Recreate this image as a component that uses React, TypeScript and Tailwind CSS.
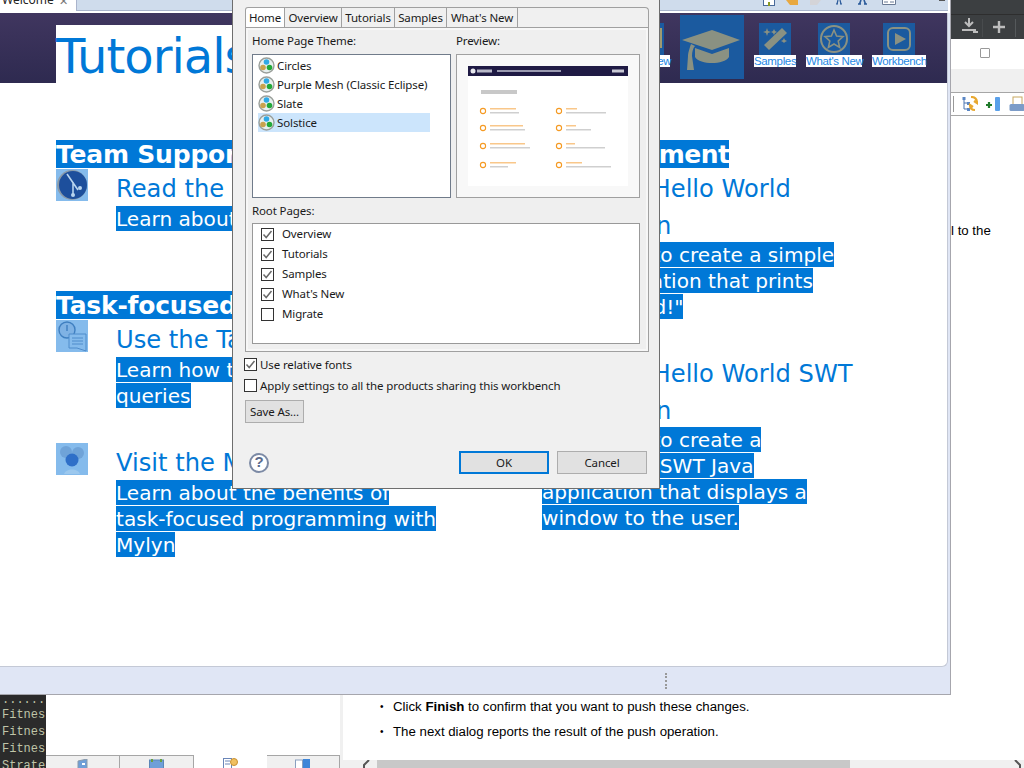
import type { ReactNode } from "react";

const theme = ["Circles", "Purple Mesh (Classic Eclipse)", "Slate", "Solstice"];
const rootPages = [
  { label: "Overview", checked: true },
  { label: "Tutorials", checked: true },
  { label: "Samples", checked: true },
  { label: "What's New", checked: true },
  { label: "Migrate", checked: false },
];
const dialogTabs = ["Overview", "Tutorials", "Samples", "What's New"];
const previewRows = [
  { y: 43, a: 26, b: 29, c: 11, d: 40 },
  { y: 60, a: 33, b: 35, c: 10, d: 25 },
  { y: 78, a: 35, b: 40, c: 9, d: 39 },
  { y: 97, a: 26, b: 18, c: 16, d: 45 },
];

function ThemeIcon() {
  return (
    <svg width="17" height="17" viewBox="0 0 17 17" className="shrink-0">
      <circle cx="8.5" cy="8.5" r="7.5" fill="#e8f0f0" stroke="#9a9f9a" strokeWidth="1.4" />
      <circle cx="8.5" cy="5" r="2.8" fill="#2fa9e6" />
      <circle cx="5" cy="10.5" r="2.8" fill="#c9a24e" />
      <circle cx="11.5" cy="10.5" r="2.8" fill="#22a83a" />
    </svg>
  );
}

function Check({ checked }: { checked: boolean }) {
  return (
    <div className="w-[13px] h-[13px] border border-[#333333] bg-white shrink-0 flex items-center justify-center">
      {checked && (
        <svg width="11" height="11" viewBox="0 0 11 11">
          <path d="M1.5 5.5 L4.2 8.5 L9.5 2" fill="none" stroke="#6a6a6a" strokeWidth="1.5" />
        </svg>
      )}
    </div>
  );
}

function PreviewShot() {
  return (
    <svg width="160" height="120" viewBox="0 0 160 120">
      <rect width="160" height="120" fill="#ffffff" />
      <rect width="160" height="10" fill="#1f1a44" />
      <circle cx="5" cy="5" r="2.5" fill="#e8e8ee" />
      <rect x="9" y="3.5" width="15" height="3" fill="#b8b8c8" />
      <rect x="29" y="4" width="64" height="2" fill="#9a9ab0" />
      <rect x="144" y="3.5" width="12" height="3" fill="#c8c8d4" />
      <rect x="13" y="24" width="36" height="4" fill="#c8c8c8" />
      {previewRows.map((r) => (
        <g key={r.y}>
          <circle cx="15" cy={r.y + 2} r="2.6" fill="none" stroke="#f59a23" strokeWidth="1.1" />
          <rect x="22" y={r.y - 1} width={r.a} height="1.5" fill="#f9c78a" />
          <rect x="22" y={r.y + 3} width={r.b} height="1.5" fill="#cfcfcf" />
          <circle cx="91" cy={r.y + 2} r="2.6" fill="none" stroke="#f59a23" strokeWidth="1.1" />
          <rect x="98" y={r.y - 1} width={r.c} height="1.5" fill="#f9c78a" />
          <rect x="98" y={r.y + 3} width={r.d} height="1.5" fill="#cfcfcf" />
        </g>
      ))}
    </svg>
  );
}

function Dialog() {
  return (
    <div className="absolute left-[232px] top-0 w-[428px] h-[489px] bg-[#f0f0f0] border-x border-b border-[#6e6e6e] pt-[7px] font-['Noto_Sans',sans-serif] text-[11.5px] tracking-[-0.12px] text-[#1a1a1a]">
      <div className="ml-[12px] w-[404px] h-[345px] flex flex-col">
        <div className="flex h-[20px] items-stretch">
          <div className="w-[40px] bg-white border border-b-0 border-[#a0a0a0] rounded-tl-[3px] flex items-center justify-center">Home</div>
          {dialogTabs.map((t, i) => (
            <div
              key={t}
              className={`border-t border-r border-[#a0a0a0] flex items-center justify-center ${["w-[57px]", "w-[53px]", "w-[52px]", "w-[71px]"][i]}`}
            >
              {t}
            </div>
          ))}
          <div className="flex-1 border-t border-r border-[#a0a0a0] rounded-tr-[4px] mb-[-1px]" />
        </div>
        <div className="flex-1 border border-[#a0a0a0] pl-[6px] bg-[#efefef] shadow-[inset_0_0_0_2px_#f7f7f7]">
          <div className="grid grid-cols-[199px_184px] gap-x-[5px] pt-[5px]">
            <div className="leading-[16px] h-[21px]">Home Page Theme:</div>
            <div className="leading-[16px] h-[21px]">Preview:</div>
            <div className="h-[144px] border border-[#707b8a] bg-white pl-[5px] pt-[1px]">
              {theme.map((t) => (
                <div
                  key={t}
                  className={`h-[19px] w-[172px] flex items-center gap-[2px] ${t === "Solstice" ? "bg-[#cce5fc]" : ""}`}
                >
                  <ThemeIcon />
                  <span className="whitespace-nowrap">{t}</span>
                </div>
              ))}
            </div>
            <div className="h-[144px] border border-[#a0a0a0] bg-[#f8f8f8] flex items-center justify-center">
              <PreviewShot />
            </div>
          </div>
          <div className="mt-[5px] h-[20px] leading-[16px]">Root Pages:</div>
          <div className="w-[388px] h-[121px] border border-[#999999] bg-white pl-[8px]">
            {rootPages.map((p) => (
              <div key={p.label} className="h-[20px] flex items-center gap-[8px]">
                <Check checked={p.checked} />
                <span>{p.label}</span>
              </div>
            ))}
          </div>
        </div>
      </div>
      <div className="ml-[11px] mt-[2px] h-[21px] flex items-center gap-[3px]">
        <Check checked />
        <span>Use relative fonts</span>
      </div>
      <div className="ml-[11px] h-[21px] flex items-center gap-[3px]">
        <Check checked={false} />
        <span className="whitespace-nowrap">Apply settings to all the products sharing this workbench</span>
      </div>
      <div className="ml-[12px] mt-[4px] w-[59px] h-[23px] border border-[#adadad] bg-[#e1e1e1] flex items-center justify-center">Save As...</div>
      <div className="mt-[28px] h-[23px] pl-[16px] pr-[12px] flex items-center">
        <div className="w-[20px] h-[20px] rounded-full border-2 border-[#7c8aa5] bg-white flex items-center justify-center font-['Liberation_Sans',sans-serif] font-bold text-[15px] text-[#5b6b8c]">?</div>
        <div className="ml-auto w-[90px] h-[23px] border-2 border-[#0078d7] bg-[#e1e1e1] flex items-center justify-center">OK</div>
        <div className="ml-[8px] w-[90px] h-[23px] border border-[#adadad] bg-[#e1e1e1] flex items-center justify-center">Cancel</div>
      </div>
    </div>
  );
}

function NavItem({ label, children, big, labelWidth }: { label?: string; children: ReactNode; big?: boolean; labelWidth?: string }) {
  return (
    <div className={`flex flex-col items-center ${big ? "pt-[2px]" : "pt-[10px]"}`}>
      <div className={`${big ? "w-[64px] h-[64px]" : "w-[32px] h-[32px]"} bg-[#1b5a9f]`}>{children}</div>
      {label && (
        <div className={`h-[12px] bg-white text-center text-[11.5px] leading-[12px] tracking-[-0.35px] text-[#1e88e5] font-['Liberation_Sans',sans-serif] whitespace-nowrap ${labelWidth ?? ""}`}>
          {label}
        </div>
      )}
    </div>
  );
}

function Banner() {
  const c = "#8a9182";
  return (
    <div className="h-[70px] shrink-0 flex bg-gradient-to-b from-[#40365f] to-[#2e2a50] pl-[56px]">
      <div className="mt-[12px] w-[300px] h-[58px] bg-white pt-[4px] text-[48px] leading-[54px] tracking-[-1px] text-[#0078d7] font-['DejaVu_Sans',sans-serif]">
        Tutorials
      </div>
      <div className="ml-auto flex gap-[10px] pr-[21px]">
        <NavItem label="Overview" labelWidth="w-[44px]">
          <svg viewBox="0 0 32 32" width="32" height="32">
            <path d="M29 5 V25" stroke="#a09a70" strokeWidth="2" fill="none" />
          </svg>
        </NavItem>
        <NavItem big>
          <svg viewBox="0 0 64 64" width="64" height="64">
            <path d="M32 15 L60 25 L32 35 L2 25 Z" fill={c} />
            <path d="M15 33 L32 39 L49 33 V42 C44 50 20 50 15 42 Z" fill={c} />
            <path d="M11 29 C9 35 8 38 8 41 L7 55 H14 L12 41 C12 37 13 33 15 31 Z" fill={c} />
          </svg>
        </NavItem>
        <NavItem label="Samples" labelWidth="w-[42px]">
          <svg viewBox="0 0 32 32" width="32" height="32">
            <path d="M23 5 L28 10 L10 27 L5 22 Z" fill={c} />
            <path d="M8 5 L9 8 L12 9 L9 10 L8 13 L7 10 L4 9 L7 8 Z M15 6 L16 8 L18 9 L16 10 L15 12 L14 10 L12 9 L14 8 Z M25 15 L26 17 L28 18 L26 19 L25 20 L24 19 L22 18 L24 17 Z" fill={c} />
          </svg>
        </NavItem>
        <NavItem label="What's New" labelWidth="w-[56px]">
          <svg viewBox="0 0 32 32" width="32" height="32">
            <circle cx="16" cy="16" r="13" fill="none" stroke={c} strokeWidth="2" />
            <path d="M16 7 L18.6 13 L25 13.6 L20.2 18 L21.6 24.4 L16 21 L10.4 24.4 L11.8 18 L7 13.6 L13.4 13 Z" fill="none" stroke={c} strokeWidth="1.6" />
          </svg>
        </NavItem>
        <NavItem label="Workbench" labelWidth="w-[54px]">
          <svg viewBox="0 0 32 32" width="32" height="32">
            <rect x="5" y="5" width="22" height="22" rx="5" fill="none" stroke={c} strokeWidth="2" />
            <path d="M12 10 L23 16 L12 22 Z" fill={c} />
          </svg>
        </NavItem>
      </div>
    </div>
  );
}

function Heading({ children, tight }: { children: ReactNode; tight?: boolean }) {
  return (
    <h2 className={`h-[28px] text-[25px] font-bold whitespace-nowrap ${tight ? "tracking-[-0.5px]" : "tracking-[-0.2px]"}`}>
      <span className="block w-max h-[28px] leading-[29px] bg-[#0078d7] text-white">{children}</span>
    </h2>
  );
}

function Item({ icon, title, lines, className, twoLine }: { icon: ReactNode; title: ReactNode; lines: string[]; className?: string; twoLine?: boolean }) {
  return (
    <div className={`flex ${className ?? ""}`}>
      <div className="w-[32px] h-[32px] bg-[#85bbec] shrink-0">{icon}</div>
      <div className="ml-[28px] pt-[2px]">
        <div className="text-[24.2px] leading-[37px] text-[#0078d7] whitespace-nowrap">{title}</div>
        <div className={`text-[20.1px] leading-[26px] whitespace-nowrap mb-[-1px] ${twoLine ? "-mt-[3px]" : "-mt-[2px]"}`}>
          {lines.map((l) => (
            <div key={l}>
              <span className="bg-[#0078d7] text-white pt-[1px]">{l}</span>
            </div>
          ))}
        </div>
      </div>
    </div>
  );
}

function Content() {
  return (
    <div className="flex-1 grid grid-cols-[426px_1fr] pl-[56px] pt-[57px] font-['DejaVu_Sans',sans-serif]">
      <div>
        <Heading>Team Support with Git</Heading>
        <Item
          className="mt-[1px]"
          icon={
            <svg viewBox="0 0 32 32" width="32" height="32">
              <circle cx="16" cy="16" r="15" fill="#8a9aa8" />
              <circle cx="17" cy="16" r="14" fill="#1d4f9c" />
              <path d="M11 5 L22 21 M17 13 L17 26" stroke="#b7d4ee" strokeWidth="1.6" fill="none" />
              <circle cx="24" cy="19" r="2" fill="#b7d4ee" />
              <circle cx="17" cy="26" r="2" fill="#b7d4ee" />
            </svg>
          }
          title="Read the Git tutorial"
          lines={["Learn about Git"]}
        />
        <div className="mt-[60px]">
          <Heading>Task-focused programming</Heading>
        </div>
        <Item
          className="mt-[1px]"
          icon={
            <svg viewBox="0 0 32 32" width="32" height="32">
              <circle cx="11" cy="10" r="8" fill="#7fb2e4" stroke="#3f7fc0" strokeWidth="1.4" />
              <path d="M11 5 V11" stroke="#3f7fc0" strokeWidth="1.4" />
              <path d="M13 14 H30 V31 L21 28 H13 Z" fill="#85bbec" stroke="#4f8ccb" />
              <path d="M16 18 H27 M16 21 H27 M16 24 H27" stroke="#4f8ccb" />
            </svg>
          }
          title="Use the Task List"
          lines={["Learn how to use tasks and", "queries"]}
        />
        <Item
          className="mt-[35px]"
          icon={
            <svg viewBox="0 0 32 32" width="32" height="32">
              <circle cx="10" cy="9" r="6" fill="#6fa3d8" />
              <circle cx="22" cy="10" r="6" fill="#6fa3d8" />
              <path d="M8 31 C10 25 22 25 24 31 Z" fill="#9cc8ee" />
              <circle cx="16" cy="17" r="6.5" fill="#2f6fc8" />
            </svg>
          }
          title="Visit the Mylyn site"
          lines={["Learn about the benefits of", "task-focused programming with", "Mylyn"]}
        />
      </div>
      <div>
        <Heading tight>Java Development</Heading>
        <Item
          className="mt-[1px]"
          twoLine
          icon={<div />}
          title={<>Create a Hello World<br /><span className="tracking-[-0.4px]">application</span></>}
          lines={["Learn how to create a simple", "Java application that prints", "\"Hello World!\""]}
        />
        <Item
          className="mt-[35px]"
          twoLine
          icon={<div />}
          title={<>Create a Hello World SWT<br /><span className="tracking-[-0.4px]">application</span></>}
          lines={["Learn how to create a", "standalone SWT Java", "application that displays a", "window to the user."]}
        />
      </div>
    </div>
  );
}

function MainWindow() {
  return (
    <div className="w-[951px] h-[695px] shrink-0 flex flex-col bg-[#e0e6f5] border-r border-b border-[#a6a6ad]">
      <div className="h-[13px] shrink-0 flex bg-white overflow-hidden">
        <div className="w-[76px] relative font-['Noto_Sans',sans-serif] text-[12px] leading-[12px] text-[#222]">
          <span className="absolute left-[2px] -top-[6px]">Welcome</span>
          <span className="absolute left-[59px] -top-[5px] text-[11px] text-[#777]">✕</span>
        </div>
        <div className="flex-1 h-[11px] mr-[2px] bg-[#cfdcec] border-l border-b border-[#aab4cc] flex items-start pl-[686px] gap-[10px]">
          <svg width="12" height="6" viewBox="0 0 12 6"><rect x="0.5" y="-3" width="11" height="8.5" fill="#fff" stroke="#4a6a9a" /><rect x="5" y="2" width="2" height="4" fill="#8a9a20" /></svg>
          <svg width="14" height="5" viewBox="0 0 14 5"><path d="M1 0 L5 5 H13 V0 Z" fill="#e8a840" /></svg>
          <svg width="13" height="5" viewBox="0 0 13 5"><path d="M12 0 L8 5 H1 V0 Z" fill="#d4d4d8" /></svg>
          <svg width="8" height="5" viewBox="0 0 8 5" className="ml-[3px]"><path d="M1 4 H3 M5 4 H7 M3 0 L2 4 M5 0 L6 4" stroke="#2a5a9a" strokeWidth="1.2" /></svg>
          <svg width="11" height="5" viewBox="0 0 11 5" className="ml-[4px]"><path d="M1 4 H4 M7 4 H10 M4 0 L2.5 4 M7 0 L8.5 4" stroke="#2a5a9a" strokeWidth="1.6" /></svg>
          <svg width="14" height="5" viewBox="0 0 14 5" className="ml-[4px]"><path d="M0.5 0 V4.5 H13.5 V0 M2 2 H6 M8 2 H12" stroke="#6a7a94" fill="#fff" /></svg>
          <div className="ml-[33px] w-[6px] h-[1px] bg-[#555]" />
        </div>
      </div>
      <div className="h-[654px] mr-[2px] flex flex-col bg-white border-r border-b border-[#c4c9d6] rounded-br-[6px] overflow-hidden">
        <Banner />
        <Content />
      </div>
      <div className="flex-1 flex items-center pl-[665px]">
        <div className="h-[16px] border-l-2 border-dotted border-[#999]" />
      </div>
    </div>
  );
}

function RightPanel() {
  return (
    <div className="flex-1 flex flex-col font-['Liberation_Sans',sans-serif]">
      <div className="h-[39px] shrink-0 bg-[#3c3f41] flex flex-col">
        <div className="h-[15px] border-b border-[#2e2e2e]" />
        <div className="flex-1 flex items-center">
          <svg width="32" height="24" viewBox="0 0 32 24">
            <path d="M18 3 V10 M14 7 L18 11 L22 7" stroke="#bdbdbd" strokeWidth="2" fill="none" />
            <path d="M11 15 H25 M22 17 H27" stroke="#bdbdbd" strokeWidth="2" />
            <path d="M32 4 V22" stroke="#55595b" />
          </svg>
          <svg width="33" height="24" viewBox="0 0 33 24">
            <path d="M16 6 V18 M10 12 H22" stroke="#bdbdbd" strokeWidth="2.4" />
            <path d="M32.5 4 V22" stroke="#55595b" />
          </svg>
        </div>
      </div>
      <div className="h-[30px] shrink-0 bg-white flex items-center pl-[29px] pb-[2px]">
        <div className="w-[10px] h-[10px] border border-[#999] rounded-[1px]" />
      </div>
      <div className="h-[24px] shrink-0 bg-[#f0f0f0] border-b border-[#a6a6a6]" />
      <div className="h-[23px] shrink-0 bg-white border-b border-[#a6a6a6] flex items-center pl-[2px]">
        <div className="w-px h-[16px] bg-[#999]" />
        <svg width="16" height="16" viewBox="0 0 16 16" className="ml-[8px] shrink-0">
          <path d="M2 2 V13 H6 M2 7 H6" stroke="#4a74b0" fill="none" />
          <rect x="0.5" y="1" width="3" height="3" fill="#5a86c4" />
          <rect x="5" y="6" width="3" height="3" fill="#5a86c4" />
          <rect x="5" y="12" width="3" height="3" fill="#5a86c4" />
          <path d="M9 1 C14 1 15 4 15 7 L12 5 M13 14 C9 14 8 11 8 9 L11 11" stroke="#e8a830" strokeWidth="2.2" fill="none" />
        </svg>
        <svg width="16" height="16" viewBox="0 0 16 16" className="ml-[7px] shrink-0">
          <path d="M4 6 V12 M1 9 H7" stroke="#1f7a2a" strokeWidth="2.2" />
          <rect x="10" y="1" width="5" height="14" rx="1" fill="#5aa0ea" />
        </svg>
        <svg width="15" height="16" viewBox="0 0 15 16" className="ml-[8px] shrink-0">
          <rect x="4" y="1" width="9" height="9" fill="#fff" stroke="#c8a860" />
          <rect x="0.5" y="8" width="15" height="7" rx="1.5" fill="#7c9cc8" />
        </svg>
      </div>
      <div className="flex-1 bg-white pt-[108px] text-[13.25px] leading-[14px] text-black whitespace-nowrap">l to the</div>
    </div>
  );
}

function BottomTab({ selected, width, children }: { selected?: boolean; width: string; children: ReactNode }) {
  return (
    <div className={`h-[13px] overflow-hidden flex justify-center pt-[3px] ${width} ${selected ? "bg-white" : "bg-[#f0f0f0] border-t border-r border-[#a6a6a6]"}`}>
      {children}
    </div>
  );
}

function BottomRow() {
  return (
    <div className="h-[73px] flex">
      <div className="w-[46px] shrink-0 bg-[#2b2b2b] overflow-hidden pl-[2px] pt-[1px] font-['Liberation_Mono',monospace] text-[12px] leading-[17px] text-[#bfc4a8] whitespace-nowrap">
        <div className="h-[11px] leading-[8px]">......</div>
        <div>Fitness</div>
        <div>Fitness</div>
        <div>Fitness</div>
        <div>Strategy</div>
      </div>
      <div className="w-[294px] shrink-0 flex flex-col bg-white">
        <div className="flex-1" />
        <div className="flex">
          <BottomTab width="w-[74px]">
            <svg width="12" height="11" viewBox="0 0 12 11"><path d="M1 2 L10 0 V11 H1 Z" fill="#6f9fd8" stroke="#8a9aaa" /><rect x="5" y="4" width="3" height="2" fill="#fff" /></svg>
          </BottomTab>
          <BottomTab width="w-[74px]">
            <svg width="15" height="11" viewBox="0 0 15 11"><rect x="0.5" y="1" width="14" height="10" fill="#6f9fd8" stroke="#5a86b8" /><path d="M3 0 V3 M12 0 V3" stroke="#6aa040" strokeWidth="2" /></svg>
          </BottomTab>
          <BottomTab selected width="w-[73px]">
            <svg width="15" height="11" viewBox="0 0 15 11"><rect x="0.5" y="0.5" width="8" height="10" fill="#fff" stroke="#6a86b8" /><path d="M2 3 H7 M2 6 H7" stroke="#6a86b8" /><circle cx="11" cy="4" r="3.5" fill="#f0c060" stroke="#c89030" /></svg>
          </BottomTab>
          <BottomTab width="w-[73px]">
            <svg width="16" height="11" viewBox="0 0 16 11"><rect x="0.5" y="1" width="7" height="10" fill="#fff" stroke="#8aa0c0" /><rect x="8" y="0" width="7" height="11" fill="#3f86d8" /></svg>
          </BottomTab>
        </div>
      </div>
      <div className="flex-1 flex flex-col bg-[#f0f0f0] pl-[3px]">
        <div className="h-[65px] bg-white pl-[37px] pt-[5px] font-['Liberation_Sans',sans-serif] text-[13.25px] leading-[14px] text-black">
          <div className="flex items-center">
            <span className="w-[13px] text-[10px]">•</span>
            <span>Click <b>Finish</b> to confirm that you want to push these changes.</span>
          </div>
          <div className="flex items-center mt-[11px]">
            <span className="w-[13px] text-[10px]">•</span>
            <span>The next dialog reports the result of the push operation.</span>
          </div>
        </div>
        <div className="flex-1 flex items-start pl-[18px]">
          <svg width="12" height="8" viewBox="0 0 12 8" className="shrink-0"><path d="M8 0 L3 5 V8" stroke="#555" strokeWidth="2" fill="none" /></svg>
          <div className="ml-[4px] w-[473px] h-[8px] bg-[#c8c8c8]" />
          <svg width="8" height="8" viewBox="0 0 8 8" className="ml-auto mr-[2px] shrink-0"><path d="M1 0 L6 5 V8" stroke="#555" strokeWidth="2" fill="none" /></svg>
        </div>
      </div>
    </div>
  );
}

export default function App() {
  return (
    <div className="relative w-[1024px] h-[768px] overflow-hidden bg-white flex flex-col">
      <div className="h-[695px] flex shrink-0">
        <MainWindow />
        <RightPanel />
      </div>
      <BottomRow />
      <Dialog />
    </div>
  );
}
